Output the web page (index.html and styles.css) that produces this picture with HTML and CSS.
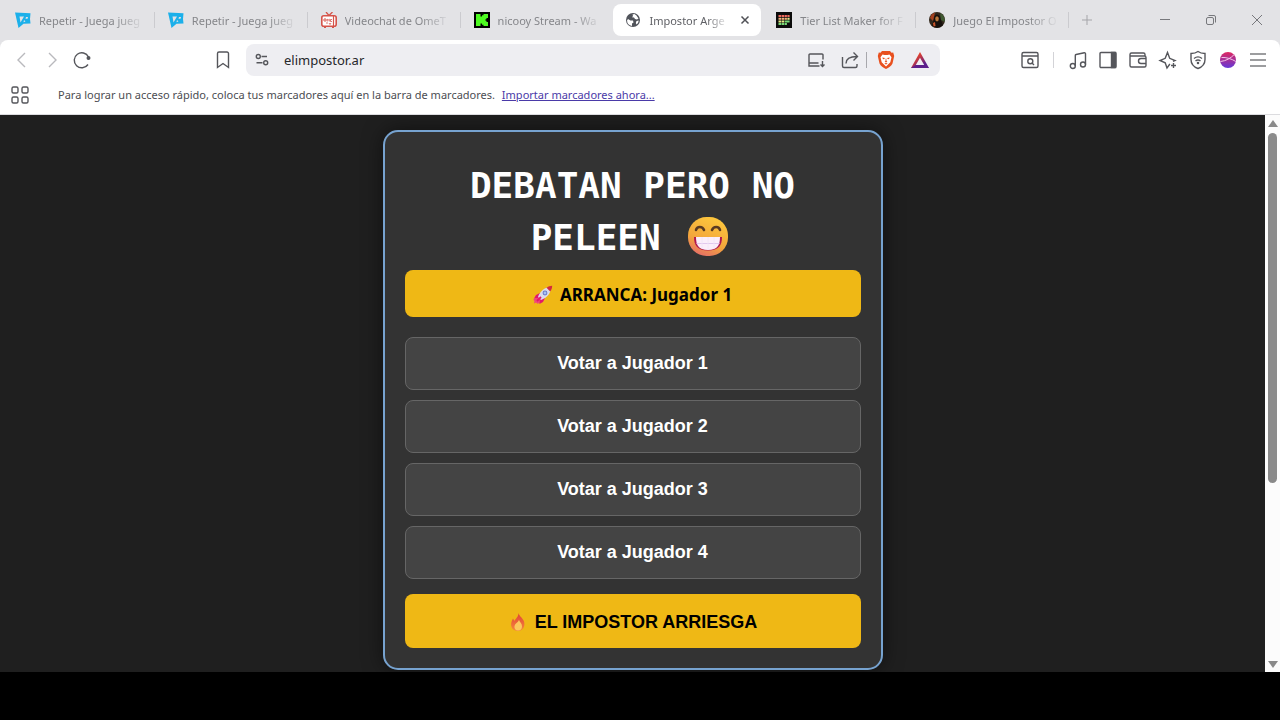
FILE: index.html
```html
<!DOCTYPE html>
<html lang="es">
<head>
  <meta charset="UTF-8" />
  <meta name="viewport" content="width=device-width, initial-scale=1.0"/>
  <title>Impostor Argentino</title>
  <link rel="stylesheet" href="styles.css">
</head>
<body>

  <svg class="defs" aria-hidden="true">
    <defs>
      <linearGradient id="bat" x1="0" y1="0" x2="1" y2="1">
        <stop offset="0.3" stop-color="#e0402e"/>
        <stop offset="0.75" stop-color="#5c1f8c"/>
      </linearGradient>
      <linearGradient id="leo" x1="0" y1="0" x2="0" y2="1">
        <stop offset="0" stop-color="#e02860"/>
        <stop offset="1" stop-color="#6538d8"/>
      </linearGradient>
      <linearGradient id="face" x1="0.6" y1="0" x2="0.2" y2="1">
        <stop offset="0" stop-color="#fdc63c"/>
        <stop offset="0.6" stop-color="#f3a63c"/>
        <stop offset="1" stop-color="#e4686c"/>
      </linearGradient>
      <linearGradient id="flame" x1="0" y1="0" x2="0" y2="1">
        <stop offset="0" stop-color="#e23f36"/>
        <stop offset="1" stop-color="#f58a3c"/>
      </linearGradient>
      <symbol id="minijuegos" viewBox="0 0 16 16">
        <path fill="#1cb0ea" d="M0 .5 15.500 1.200 15 7l.5 4.500-7 .3L3.500 16z"/>
        <path fill="#e3e3e6" d="M4.500 4.500h4.500L5.500 10.500zM11 5h2l-.5 1.800H10.500zM9 8l1.500 1.500-2 .8z"/>
      </symbol>
    </defs>
  </svg>

  <div class="browser">
    <div class="tab-strip">
      <div class="tabs">
        <div class="tab">
          <svg class="favicon"><use href="#minijuegos"/></svg>
          <button class="tab-title">Repetir - Juega jueg</button>
        </div>
        <div class="tab">
          <svg class="favicon"><use href="#minijuegos"/></svg>
          <button class="tab-title">Repetir - Juega jueg</button>
        </div>
        <div class="tab">
          <svg class="favicon" viewBox="0 0 16 16">
            <path d="M5 0l3 3.500L11.500 0" fill="none" stroke="#d5544a" stroke-width="1.300"/>
            <rect x=".8" y="3.800" width="14.400" height="10.400" rx="2" fill="#fff" stroke="#d5544a" stroke-width="1.600"/>
            <path d="M12.500 4v10" stroke="#d5544a" stroke-width="1.200"/>
            <path d="M3 15.200h2M11 15.200h2" stroke="#d5544a" stroke-width="1.500"/>
            <circle cx="4" cy="8" r="1.200" fill="none" stroke="#d5544a"/>
            <path d="M6.300 9.500V7.200l1 .8 1-.8v2.300M11 7.500H9.500v2H11M5 11h2M8 11l1 1.500 1-1.500" fill="none" stroke="#d5544a" stroke-width=".8"/>
          </svg>
          <button class="tab-title">Videochat de OmeT</button>
        </div>
        <div class="tab before-active">
          <svg class="favicon" viewBox="0 0 16 16">
            <rect width="16" height="16" fill="#000"/>
            <path fill="#4dfb21" d="M2 2h4.500v2.500H8V3.300h1.500V2H14v4h-1.500v1.200h-1v1.600h1V10H14v4H9.500v-1.300H8v-1.200H6.500V14H2z"/>
          </svg>
          <button class="tab-title">nicooy Stream - Wa</button>
        </div>
        <div class="tab active">
          <svg class="favicon" viewBox="0 0 16 16">
            <circle cx="8" cy="8" r="7" fill="#50535a"/>
            <path fill="#fff" d="M3 7l2.500 1.500L8 8.500l.5 2-1.500 1V14a6 6 0 0 1-5-5.500zM7.500 2.500L9.500 2l2 1.500 2 3-1.500 1-2-.5-1-1.500-2-.2 1-1.300z"/>
            <path fill="#fff" d="M11.500 9l2.300-.5a6 6 0 0 1-2.300 4l-.7-1.500z"/>
          </svg>
          <button class="tab-title">Impostor Arge</button>
          <button class="tab-close" aria-label="Cerrar pestaña">
            <svg class="icon-close" viewBox="0 0 10 10"><path d="M1.500 1.500l7 7M8.500 1.500l-7 7"/></svg>
          </button>
        </div>
        <div class="tab">
          <svg class="favicon" viewBox="0 0 16 16">
            <rect width="16" height="16" fill="#0b0b0b"/>
            <path fill="#ef6a5e" d="M2.500 3h2.600v2H2.500zM5.600 3h2.600v2H5.600zM8.700 3h2.200v2H8.700zM11.400 3h2.200v2h-2.200z"/>
            <path fill="#f3b27a" d="M2.500 5.700h2.600v2H2.500zM5.600 5.700h2.600v2H5.600zM8.700 5.700h2.200v2H8.700z"/>
            <path fill="#e8ec86" d="M2.500 8.400h2.600v2H2.500zM5.600 8.400h2.600v2H5.600zM11.400 5.700h2.200v2h-2.200z"/>
            <path fill="#77d877" d="M2.500 11.100h2.600v2H2.500zM5.600 11.100h2.600v2H5.600zM8.700 11.100h2.200v2H8.700zM8.700 8.400h4.900v2H8.700z"/>
          </svg>
          <button class="tab-title">Tier List Maker for F</button>
        </div>
        <div class="tab">
          <svg class="favicon" viewBox="0 0 16 16">
            <circle cx="8" cy="8" r="8" fill="#33281c"/>
            <path fill="#a5401f" d="M1 6a8 8 0 0 1 5-5.500L4 9z"/>
            <path fill="#3f5a32" d="M11 1a8 8 0 0 1 4.500 9L12 8z"/>
            <path fill="#17110d" d="M5 7c0-6 6-6 6.500 0l2.500 6a8 8 0 0 1-11 1z"/>
            <ellipse cx="8" cy="6.800" rx="1.800" ry="2.600" fill="#b9773c"/>
            <path fill="#c8542a" d="M4 11l2-1 .5 4-2 .5z"/>
          </svg>
          <button class="tab-title">Juego El Impostor O</button>
        </div>
      </div>
      <button class="new-tab" aria-label="Nueva pestaña">
        <svg class="icon-plus" viewBox="0 0 12 12"><path d="M6 1v10M1 6h10"/></svg>
      </button>
      <div class="window-controls">
        <button aria-label="Minimizar"><svg viewBox="0 0 12 12"><path d="M1 5.500h10"/></svg></button>
        <button aria-label="Restaurar"><svg viewBox="0 0 12 12"><rect x="1.500" y="3.500" width="7" height="7" rx="1.500"/><path d="M3.500 1.500H9a1.500 1.500 0 0 1 1.500 1.500v5.500"/></svg></button>
        <button aria-label="Cerrar"><svg viewBox="0 0 12 12"><path d="M1 1l10 10M11 1L1 11"/></svg></button>
      </div>
    </div>

    <div class="toolbar">
      <button class="tool faded" aria-label="Atrás"><svg viewBox="0 0 20 20"><path d="M13 3L6 10l7 7"/></svg></button>
      <button class="tool faded" aria-label="Adelante"><svg viewBox="0 0 20 20"><path d="M7 3l7 7-7 7"/></svg></button>
      <button class="tool" aria-label="Recargar"><svg viewBox="0 0 20 20"><path d="M16 14.500A7.500 7.500 0 1 1 16.500 7"/><circle cx="16.500" cy="8" r="1.300" fill="#55565b"/></svg></button>
      <button class="tool bookmark" aria-label="Guardar marcador"><svg viewBox="0 0 20 20"><path d="M4.500 3.500A1.500 1.500 0 0 1 6 2h8a1.500 1.500 0 0 1 1.500 1.500v14L10 13.500l-5.500 4z"/></svg></button>

      <div class="address-bar">
        <button class="tool" aria-label="Información del sitio"><svg viewBox="0 0 20 20"><circle cx="6.300" cy="6.500" r="2"/><path d="M9.500 6.500h5.500M4.500 12.800h6"/><circle cx="13.700" cy="12.800" r="2"/></svg></button>
        <input class="url" type="text" value="elimpostor.ar" aria-label="Dirección">
        <button class="tool" aria-label="Instalar"><svg viewBox="0 0 20 20"><path d="M17 9.500V5a1 1 0 0 0-1-1H4a1 1 0 0 0-1 1v11h10.500M2.500 13h10M16.500 11v5M14.500 14.500l2 2 2-2"/></svg></button>
        <button class="tool share" aria-label="Compartir"><svg viewBox="0 0 20 20"><path d="M2.500 7v9a1.500 1.500 0 0 0 1.500 1.500h11.500a1.500 1.500 0 0 0 1.500-1.500v-2M6 13.500C6 9 9 6.500 17 6.500M13.500 2.500l4 4-4 4"/></svg></button>
        <span class="divider"></span>
        <button class="tool" aria-label="Brave Shields">
          <svg viewBox="0 0 20 20" class="filled">
            <path fill="#e8501f" d="M6 1h8l1.500 1.700 1.700-.2 1 3.500-1.700 7.500c-1 2.700-4 4-6.500 5.500-2.500-1.500-5.500-2.800-6.500-5.500L1.800 6l1-3.500 1.700.2z"/>
            <path fill="#fff" d="M6.500 4.500L8.500 5h3l2-.5 2 2.700-1.200 5L10 16.500 5.700 12.200 4.500 7.200z"/>
            <path fill="#e8501f" d="M6.300 7.500l2.700.6-1 1.100-1.100-.2zM13.700 7.500l-2.700.6 1 1.100 1.100-.2zM9.700 8.500h.6l.2 2.500.9.700-1.400.9-1.400-.9.900-.7zM8.300 13.500l1.700-.6 1.700.6L10 14.500z"/>
          </svg>
        </button>
        <button class="tool rewards" aria-label="Brave Rewards">
          <svg viewBox="0 0 20 20" class="filled"><path fill="url(#bat)" fill-rule="evenodd" d="M10 2l9 16H1zM10 7.800L5.800 15h8.400z"/><path fill="#5c1f8c" d="M1 18l4.800-3h8.400L19 18z"/></svg>
        </button>
      </div>

      <div class="tools-right">
        <button class="tool" aria-label="Buscar en la página"><svg viewBox="0 0 20 20"><rect x="2" y="2.500" width="16" height="15" rx="1.500"/><path d="M2 6h16M12 13l2 2"/><circle cx="10.300" cy="11.300" r="2.500"/></svg></button>
        <span class="divider light"></span>
        <button class="tool" aria-label="Música"><svg viewBox="0 0 20 20"><circle cx="4.800" cy="16" r="2.500"/><circle cx="15" cy="14.500" r="2.500"/><path d="M7.300 16V5.500a1 1 0 0 1 .8-1l8.200-1.700a1 1 0 0 1 1.200 1v10.700"/></svg></button>
        <button class="tool" aria-label="Panel lateral"><svg viewBox="0 0 20 20"><rect x="2" y="2.500" width="16" height="15" rx="1"/><path fill="#55565b" d="M13.500 2.500h4v15h-4z"/></svg></button>
        <button class="tool" aria-label="Cartera"><svg viewBox="0 0 20 20"><path d="M17 6V4.500A1.500 1.500 0 0 0 15.500 3H3.500A1.500 1.500 0 0 0 2 4.500v11A1.500 1.500 0 0 0 3.500 17h13a1.500 1.500 0 0 0 1.500-1.500v-8A1.500 1.500 0 0 0 16.500 6H2M18 8.500h-5a2.500 2.500 0 0 0 0 5h5"/></svg></button>
        <button class="tool" aria-label="Leo AI"><svg viewBox="0 0 20 20"><path d="M12 14l-.5.500L9 18l-1.800-5.200L2 10.500l5.200-2.200L9.500 2.500l2.200 5.800L17 10.500l-2 .8M15.500 13v5M13 15.500h5"/></svg></button>
        <button class="tool" aria-label="VPN"><svg viewBox="0 0 20 20"><path d="M10 1.500c2 1.500 4.500 2 7 2v6c0 4.500-3 7.500-7 9-4-1.500-7-4.500-7-9v-6c2.500 0 5-.5 7-2z"/><path d="M6 8.500c2.500-2 5.500-2 8 0M7.500 11c1.500-1.200 3.500-1.200 5 0"/><circle cx="10" cy="13" r=".6"/></svg></button>
        <button class="tool" aria-label="Perfil"><svg viewBox="0 0 20 20" class="filled"><circle cx="10" cy="10" r="8" fill="url(#leo)"/><path d="M2.500 11.500C8 11 13 8 16 4.700M3.500 7.500C8 7 14 9 17.800 11.500" fill="none" stroke="#f3c6ea" stroke-width="1"/></svg></button>
        <button class="tool menu" aria-label="Menú"><svg viewBox="0 0 20 20"><path d="M2 4h16M2 10h16M2 16h16"/></svg></button>
      </div>
    </div>

    <div class="bookmarks-bar">
      <button class="tool" aria-label="Aplicaciones"><svg viewBox="0 0 20 20"><rect x="2" y="2" width="6" height="6" rx="1.500"/><rect x="12" y="2" width="6" height="6" rx="1.500"/><rect x="2" y="12" width="6" height="6" rx="1.500"/><rect x="12" y="12" width="6" height="6" rx="1.500"/></svg></button>
      <p>Para lograr un acceso rápido, coloca tus marcadores aquí en la barra de marcadores. <a href="#">Importar marcadores ahora...</a></p>
    </div>

    <div class="viewport">
      <main class="page">
        <div class="card">
          <h1>DEBATAN PERO NO PELEEN
            <svg class="emoji-title" viewBox="0 0 40 40" role="img" aria-label="Cara sonriente">
              <rect x="0" y="0" width="40" height="39" rx="18.500" fill="url(#face)"/>
              <path d="M8 13c1-4 6.500-4 8 0M24 13c1.500-4 7-4 8 0" fill="none" stroke="#5a3a22" stroke-width="2.600" stroke-linecap="round"/>
              <path fill="#b0184f" d="M6 20h28c0 8-3 13.500-14 13.500S6 28 6 20z"/>
              <path fill="#fbeefb" d="M8 20h24c0 8-2.500 13-12 13S8 28 8 20z"/>
              <path d="M8.500 26.500h23" stroke="#e2c8ee" stroke-width="1"/>
              <path d="M14 20v12M20 20v13M26 20v12" stroke="#f1e4f8" stroke-width=".8"/>
            </svg>
          </h1>
          <div class="starter">
            <svg class="emoji" viewBox="0 0 20 20" aria-hidden="true">
              <path fill="#e2186c" d="M3 10l4-2 1 3-3 3-4-.5zM10 17l2-4-3-1-3 3 .5 4z"/>
              <path fill="#f0447c" d="M1 13l4 0 2 3-2 3-2-1.500-2 1 .5-2.500-1-1z"/>
              <path fill="#dcdcec" d="M5 12C7 6 12 2 18 2c0 6-4 11-10 13z"/>
              <path fill="#d42a3e" d="M13.500 2.800C15 1.500 17 .8 19.200.8c0 2-.7 4.200-2 5.700z"/>
              <circle cx="12" cy="8" r="2.400" fill="#6c78c8"/>
              <circle cx="12" cy="8" r="1.400" fill="#a9c4f0"/>
              <path d="M4 16l4-4" stroke="#e2186c" stroke-width="1.800"/>
            </svg>
            ARRANCA: Jugador 1
          </div>
          <div class="votes">
            <button class="vote">Votar a Jugador 1</button>
            <button class="vote">Votar a Jugador 2</button>
            <button class="vote">Votar a Jugador 3</button>
            <button class="vote">Votar a Jugador 4</button>
          </div>
          <button class="guess">
            <svg class="emoji" viewBox="0 0 20 20" aria-hidden="true">
              <path fill="url(#flame)" d="M10.500 1c.5 3 4 4.500 5.500 8.500 1.500 5-1.500 9.500-6 9.500-5 0-8-4-6.500-9 .5-1.500 1-2.500 1.500-3.500l1.500 2.500C7.500 6.500 10.500 5 10.500 1z"/>
              <path fill="#fbc95c" d="M11 8c1 2.500 3 3.500 3 6.500 0 2.500-1.500 4-4 4s-4-1.800-3.500-4.500c.5-2.500 3.500-3.500 4.500-6z"/>
            </svg>
            EL IMPOSTOR ARRIESGA
          </button>
        </div>
      </main>
      <div class="scrollbar" aria-hidden="true">
        <span class="arrow up"></span>
        <div class="track"><div class="thumb"></div></div>
        <span class="arrow down"></span>
      </div>
    </div>
  </div>

</body>
</html>
```
FILE: styles.css
```css
* {
  box-sizing: border-box;
}

body {
  margin: 0;
  background: #000;
  font-family: 'Segoe UI', 'Noto Sans', sans-serif;
  overflow: hidden;
}

button {
  border: none;
  background: none;
  padding: 0;
  font: inherit;
  color: inherit;
  cursor: pointer;
}

svg {
  flex-shrink: 0;
}

.defs {
  position: absolute;
  width: 0;
  height: 0;
}

.browser {
  display: flex;
  flex-direction: column;
  height: calc(100vh - 48px);
  background: #e3e3e6;
}

/* Tabs */
.tab-strip {
  display: flex;
  align-items: center;
  height: 40px;
  padding-left: 2px;
}

.tabs {
  display: flex;
  flex: 0 1 1067px;
  min-width: 0;
}

.tab {
  display: flex;
  flex: 0 1 153px;
  align-items: center;
  gap: 8px;
  min-width: 0;
  height: 32px;
  padding: 0 8px 0 13px;
  color: #85868a;
  font-size: 11px;
  background: linear-gradient(#cbcbcf, #cbcbcf) right center / 1px 16px no-repeat;
}

.tab.before-active {
  background: none;
}

.tab.active {
  flex-basis: 148px;
  margin-right: 2px;
  padding: 0 10px 0 12px;
  background: #fff;
  border-radius: 8px;
  color: #606166;
}

.favicon {
  width: 16px;
  height: 16px;
}

.tab-title {
  flex: 1;
  min-width: 0;
  overflow: hidden;
  white-space: nowrap;
  text-align: left;
  -webkit-mask-image: linear-gradient(to right, #000 70%, transparent 98%);
  mask-image: linear-gradient(to right, #000 70%, transparent 98%);
}

.tab-close {
  display: flex;
  padding: 1px;
}

.icon-close {
  width: 10px;
  height: 10px;
  stroke: #505156;
  stroke-width: 1.5;
}

.new-tab {
  display: flex;
  padding: 12px;
}

.icon-plus {
  width: 12px;
  height: 12px;
  stroke: #a5a5a9;
}

.window-controls {
  display: flex;
  margin-left: auto;
}

.window-controls button {
  display: flex;
  align-items: center;
  justify-content: center;
  width: 46px;
  height: 40px;
}

.window-controls svg {
  width: 12px;
  height: 12px;
  fill: none;
  stroke: #77787c;
}

/* Toolbar */
.toolbar {
  display: flex;
  align-items: center;
  height: 40px;
  padding: 0 7px;
  background: #fff;
  border-radius: 8px 8px 0 0;
}

.tool {
  display: flex;
  flex-shrink: 0;
  align-items: center;
  justify-content: center;
  width: 30px;
  height: 30px;
}

.tool svg {
  width: 20px;
  height: 20px;
  fill: none;
  stroke: #55565b;
  stroke-width: 1.4;
}

.tool .filled {
  stroke: none;
}

.faded svg {
  stroke: #b9b9bd;
}

.menu svg {
  stroke: #7c7d80;
}

.bookmark {
  margin-left: 111px;
}

.address-bar {
  display: flex;
  flex: 0 1 694px;
  align-items: center;
  min-width: 0;
  height: 32px;
  margin-left: 8px;
  padding: 0 5px 0 1px;
  background: #eeeef2;
  border-radius: 8px;
}

.url {
  flex: 1;
  min-width: 0;
  padding: 0 0 0 7px;
  border: none;
  outline: none;
  background: none;
  color: #26272b;
  font-family: inherit;
  font-size: 13px;
}

.share {
  margin-left: 4px;
}

.rewards {
  margin-left: 4px;
}

.divider {
  flex-shrink: 0;
  width: 1px;
  height: 16px;
  margin: 0 4px 0 1px;
  background: #a8a8ad;
}

.divider.light {
  margin: 0 9px 0 8px;
  background: #d3d3d7;
}

.tools-right {
  display: flex;
  align-items: center;
  margin-left: auto;
}

/* Bookmarks */
.bookmarks-bar {
  display: flex;
  align-items: center;
  gap: 23px;
  height: 35px;
  padding: 0 5px 4px;
  background: #fff;
  border-bottom: 1px solid #dcdcdf;
}

.bookmarks-bar p {
  margin: 0;
  padding-bottom: 2px;
  color: #4c4d52;
  font-size: 11px;
  white-space: nowrap;
}

.bookmarks-bar a {
  margin-left: 4px;
  color: #4a3aa8;
}

/* Page */
.viewport {
  display: flex;
  flex: 1;
  min-height: 0;
}

.page {
  display: flex;
  flex: 1;
  align-items: flex-start;
  justify-content: center;
  padding-top: 15px;
  background: #1f1f1f;
  overflow: hidden;
}

.card {
  width: 100%;
  max-width: 500px;
  padding: 20px;
  background: #333;
  border: 2px solid #77a3d0;
  border-radius: 15px;
  box-shadow: 0 0 20px rgba(0, 0, 0, 0.5);
  text-align: center;
}

h1 {
  margin: 8px 0 6px;
  color: #fff;
  font-family: 'DejaVu Sans Mono', monospace;
  font-size: 36px;
  line-height: 52px;
}

.emoji-title {
  width: 40px;
  height: 40px;
  margin: 0 6px;
  vertical-align: -7px;
}

.emoji {
  width: 20px;
  height: 20px;
}

.starter,
.guess {
  display: flex;
  align-items: center;
  justify-content: center;
  gap: 7px;
  width: 100%;
  padding-top: 2px;
  background: #efb815;
  border-radius: 8px;
  color: #000;
  font-weight: bold;
}

.starter {
  height: 47px;
  margin-bottom: 20px;
  font-size: 17px;
}

.votes {
  display: flex;
  flex-direction: column;
  gap: 10px;
  margin-bottom: 15px;
}

.vote {
  height: 53px;
  background: #444;
  border: 1px solid #666;
  border-radius: 8px;
  color: #fff;
  font-family: 'Liberation Sans', Arial, sans-serif;
  font-size: 18px;
  font-weight: bold;
}

.guess {
  height: 54px;
  font-family: 'Liberation Sans', Arial, sans-serif;
  font-size: 18px;
}

/* Scrollbar */
.scrollbar {
  display: flex;
  flex-direction: column;
  align-items: center;
  width: 15px;
  padding: 5px 0 4px;
  background: #fcfcfc;
}

.arrow {
  border: 5px solid transparent;
}

.arrow.up {
  border-top: none;
  border-bottom: 7px solid #8a8a8a;
}

.arrow.down {
  border-bottom: none;
  border-top: 7px solid #8a8a8a;
}

.track {
  flex: 1;
  width: 9px;
  padding: 6px 0;
}

.thumb {
  height: 67%;
  background: #8a8a8a;
  border-radius: 5px;
}
```
